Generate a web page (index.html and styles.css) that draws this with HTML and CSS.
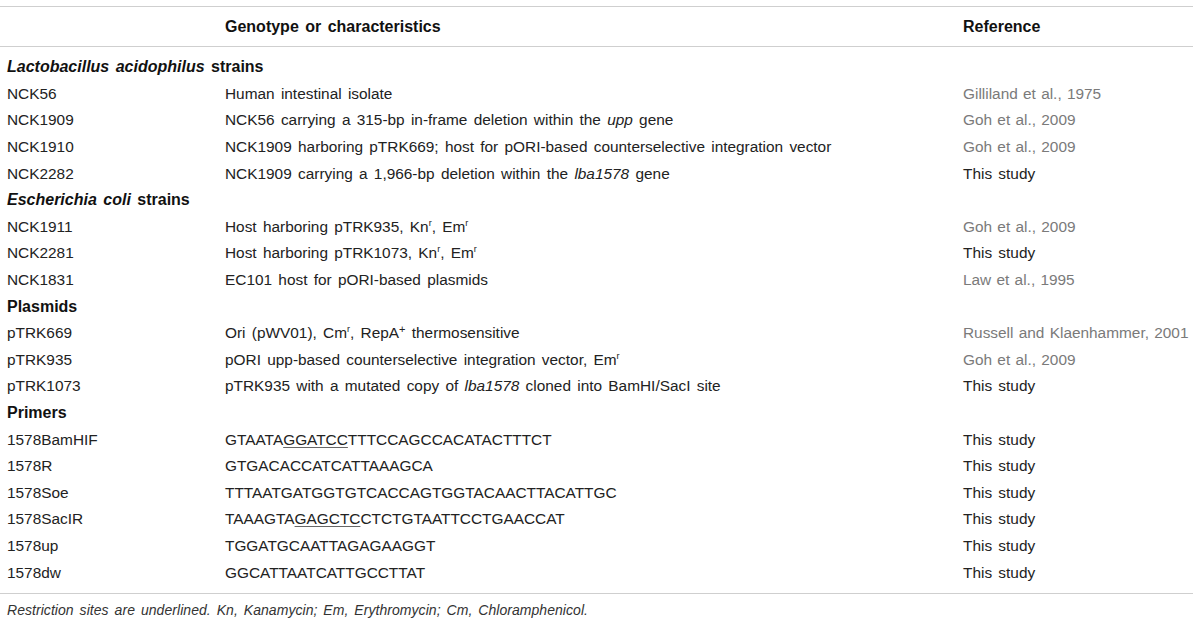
FILE: index.html
```html
<!DOCTYPE html>
<html>
<head>
<meta charset="utf-8">
<link rel="stylesheet" href="styles.css">
</head>
<body>
<div class="table">
  <div class="row head">
    <div class="c1"></div>
    <div class="c2">Genotype or characteristics</div>
    <div class="c3">Reference</div>
  </div>
  <div class="body">
    <div class="row"><div class="c1 sec"><i>Lactobacillus acidophilus</i> strains</div><div class="c2"></div><div class="c3"></div></div>
    <div class="row"><div class="c1">NCK56</div><div class="c2">Human intestinal isolate</div><div class="c3 cite">Gilliland et al., 1975</div></div>
    <div class="row"><div class="c1">NCK1909</div><div class="c2">NCK56 carrying a 315-bp in-frame deletion within the <i>upp</i> gene</div><div class="c3 cite">Goh et al., 2009</div></div>
    <div class="row"><div class="c1">NCK1910</div><div class="c2">NCK1909 harboring pTRK669; host for pORI-based counterselective integration vector</div><div class="c3 cite">Goh et al., 2009</div></div>
    <div class="row"><div class="c1">NCK2282</div><div class="c2">NCK1909 carrying a 1,966-bp deletion within the <i>lba1578</i> gene</div><div class="c3">This study</div></div>
    <div class="row"><div class="c1 sec"><i>Escherichia coli</i> strains</div><div class="c2"></div><div class="c3"></div></div>
    <div class="row"><div class="c1">NCK1911</div><div class="c2">Host harboring pTRK935, Kn<sup>r</sup>, Em<sup>r</sup></div><div class="c3 cite">Goh et al., 2009</div></div>
    <div class="row"><div class="c1">NCK2281</div><div class="c2">Host harboring pTRK1073, Kn<sup>r</sup>, Em<sup>r</sup></div><div class="c3">This study</div></div>
    <div class="row"><div class="c1">NCK1831</div><div class="c2">EC101 host for pORI-based plasmids</div><div class="c3 cite">Law et al., 1995</div></div>
    <div class="row"><div class="c1 sec">Plasmids</div><div class="c2"></div><div class="c3"></div></div>
    <div class="row"><div class="c1">pTRK669</div><div class="c2">Ori (pWV01), Cm<sup>r</sup>, RepA<sup class="plus">+</sup> thermosensitive</div><div class="c3 cite">Russell and Klaenhammer, 2001</div></div>
    <div class="row"><div class="c1">pTRK935</div><div class="c2">pORI upp-based counterselective integration vector, Em<sup>r</sup></div><div class="c3 cite">Goh et al., 2009</div></div>
    <div class="row"><div class="c1">pTRK1073</div><div class="c2">pTRK935 with a mutated copy of <i>lba1578</i> cloned into BamHI/SacI site</div><div class="c3">This study</div></div>
    <div class="row"><div class="c1 sec">Primers</div><div class="c2"></div><div class="c3"></div></div>
    <div class="row"><div class="c1">1578BamHIF</div><div class="c2">GTAATA<span class="site">GGATCC</span>TTTCCAGCCACATACTTTCT</div><div class="c3">This study</div></div>
    <div class="row"><div class="c1">1578R</div><div class="c2">GTGACACCATCATTAAAGCA</div><div class="c3">This study</div></div>
    <div class="row"><div class="c1">1578Soe</div><div class="c2">TTTAATGATGGTGTCACCAGTGGTACAACTTACATTGC</div><div class="c3">This study</div></div>
    <div class="row"><div class="c1">1578SacIR</div><div class="c2">TAAAGTA<span class="site">GAGCTC</span>CTCTGTAATTCCTGAACCAT</div><div class="c3">This study</div></div>
    <div class="row"><div class="c1">1578up</div><div class="c2">TGGATGCAATTAGAGAAGGT</div><div class="c3">This study</div></div>
    <div class="row"><div class="c1">1578dw</div><div class="c2">GGCATTAATCATTGCCTTAT</div><div class="c3">This study</div></div>
  </div>
  <div class="foot">Restriction sites are underlined. Kn, Kanamycin; Em, Erythromycin; Cm, Chloramphenicol.</div>
</div>
</body>
</html>
```
FILE: styles.css
```css
html, body {
  margin: 0;
  padding: 0;
  background: #fff;
}
body {
  font-family: "Liberation Sans", Arial, Helvetica, sans-serif;
  font-size: 15.4px;
  word-spacing: 2px;
  color: #222;
}
.table {
  width: 1193px;
  margin-top: 6px;
  border-top: 1px solid #cfcfcf;
}
.row {
  display: grid;
  grid-template-columns: 218px 738px 1fr;
  height: 26.6px;
  align-items: center;
  line-height: 18px;
  white-space: nowrap;
}
.row > div {
  padding-left: 7px;
}
.head {
  height: 39px;
  font-weight: bold;
  font-size: 16px;
  color: #111;
  border-bottom: 1px solid #cfcfcf;
}
.body {
  padding: 7px 0 7px;
  border-bottom: 1px solid #cfcfcf;
}
.sec {
  font-weight: bold;
  font-size: 16px;
  color: #111;
  overflow: visible;
}
.cite {
  color: #7a7a7a;
  word-spacing: 1px;
}
sup {
  font-size: 9px;
  line-height: 0;
  vertical-align: 6px;
}
sup.plus {
  font-size: 11px;
  vertical-align: 5px;
}
.site {
  text-decoration: underline;
  text-decoration-color: #666;
  text-underline-offset: 2px;
}
.foot {
  padding: 8px 0 0 7px;
  font-size: 14px;
  word-spacing: 2px;
  letter-spacing: 0.05px;
  font-style: italic;
  color: #333;
}
```
